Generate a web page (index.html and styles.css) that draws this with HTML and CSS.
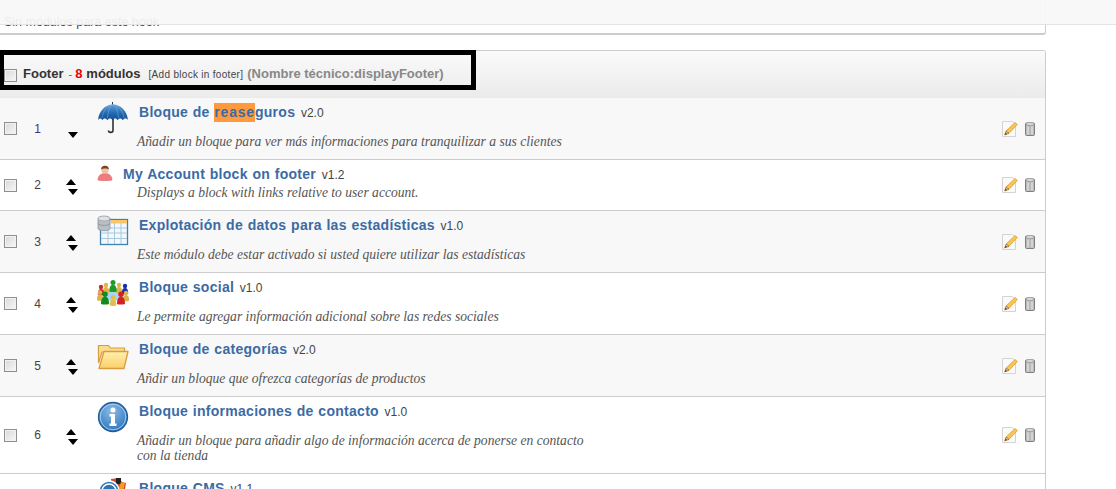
FILE: index.html
```html
<!DOCTYPE html>
<html lang="es">
<head>
<meta charset="utf-8">
<title>Módulos</title>
<link rel="stylesheet" href="styles.css">
</head>
<body>
<svg class="defs" width="0" height="0" aria-hidden="true">
  <defs>
    <linearGradient id="gUmb" x1="0" y1="0" x2="0" y2="1"><stop offset="0" stop-color="#5f9fd8"/><stop offset=".6" stop-color="#1f66ad"/><stop offset="1" stop-color="#144f8f"/></linearGradient>
    <linearGradient id="gFold" x1="0" y1="0" x2="0" y2="1"><stop offset="0" stop-color="#fff0b0"/><stop offset="1" stop-color="#fbcf68"/></linearGradient>
    <radialGradient id="gInfo" cx=".45" cy=".3" r=".8"><stop offset="0" stop-color="#8cbbe6"/><stop offset=".7" stop-color="#3f84c8"/><stop offset="1" stop-color="#2a66a8"/></radialGradient>
    <g id="pers"><circle cx="0" cy="-3" r="2.200"/><path d="M-3.200 4.500C-3.200 0-1.500-1 0-1S3.200 0 3.200 4.500C2 5.500-2 5.500-3.200 4.500z"/></g>
    <symbol id="arrows" viewBox="0 0 12 16"><path d="M0 6 5 0l5 6z" fill="#000"/><path d="M2 10h10l-5 6z" fill="#000"/></symbol>
    <symbol id="arrow-down" viewBox="0 0 12 16"><path d="M2 10h10l-5 6z" fill="#000"/></symbol>
    <symbol id="pencil" viewBox="0 0 16 16"><path d="M.5.5h10l3 3v12H.5z" fill="#fafafa" stroke="#d4d4d4"/><path d="M13 1.500l2.400 2L7 12.400 4 10z" fill="#f6c552" stroke="#d99a2b" stroke-width=".7"/><path d="M4 10l3 2.400-4.300 1.500z" fill="#e9c9a0" stroke="#8a5a20" stroke-width=".6"/><path d="M2.700 13.900l1-2.300 1.300 1.300z" fill="#5a3a10"/></symbol>
    <symbol id="trash" viewBox="0 0 10 14"><rect x=".5" y="1" width="9" height="12.500" rx="1" fill="#b9b9b9" stroke="#7f7f7f"/><ellipse cx="5" cy="2" rx="4.200" ry="1.400" fill="#e2e2e2" stroke="#8a8a8a" stroke-width=".7"/><path d="M3 4.500v8M7 4.500v8" stroke="#efefef"/></symbol>
  </defs>
</svg>

<div class="topbar"></div>
<div class="annotation"></div>

<main class="content">
  <section class="panel panel-empty">
    <p class="empty-text">Sin módulos para este hook</p>
  </section>

  <section class="panel panel-hook">
    <header class="hook-head">
      <input class="check" type="checkbox">
      <span class="hook-name">Footer</span>
      <span class="hook-dash">-</span>
      <span class="hook-count">8</span>
      <span class="hook-name">módulos</span>
      <a class="hook-add">[Add block in footer]</a>
      <span class="hook-tech">(Nombre técnico:displayFooter)</span>
    </header>

    <div class="row alt">
      <div class="cell-check"><input class="check" type="checkbox"></div>
      <div class="cell-num num-first">1</div>
      <div class="cell-move"><svg class="move"><use href="#arrow-down"/></svg></div>
      <div class="cell-main">
        <div class="head">
          <svg class="icon" viewBox="0 0 32 32">
            <path d="M15.500 0v3" stroke="#333" stroke-width="1"/>
            <path d="M1 18C2 9 8 2.500 16 2.500S30 9 31 18c-1.500-2-4-2-5.200.2-1.300-2.200-3.900-2.200-5.200 0-1.300-2.200-3.900-2.200-5 0-1.300-2.200-3.900-2.200-5.200 0-1.300-2.200-3.900-2.200-5.200 0C4.500 16 2.500 16 1 18z" fill="url(#gUmb)"/>
            <path d="M10.500 16C11 9 13 4 16 2.500 19 4 21 9 21.500 16M5 16C6 9 10 4 16 2.500 22 4 26 9 27 16" fill="none" stroke="#7fb4e4" stroke-width=".5"/>
            <path d="M16 17v11.500c0 2.500-4.500 2.500-4.500 0" fill="none" stroke="#333" stroke-width="1.600"/>
          </svg>
          <h3 class="title">Bloque de <mark class="hit">rease</mark>guros <span class="version">v2.0</span></h3>
        </div>
        <p class="desc">Añadir un bloque para ver más informaciones para tranquilizar a sus clientes</p>
      </div>
      <div class="cell-actions"><svg class="act-edit"><use href="#pencil"/></svg><svg class="act-del"><use href="#trash"/></svg></div>
    </div>

    <div class="row">
      <div class="cell-check"><input class="check" type="checkbox"></div>
      <div class="cell-num">2</div>
      <div class="cell-move"><svg class="move"><use href="#arrows"/></svg></div>
      <div class="cell-main">
        <div class="head head-small">
          <svg class="icon-small" viewBox="0 0 16 16">
            <path d="M1 15c0-4 2.500-6.500 7-6.500s7 2.500 7 6.500c-2 1-12 1-14 0z" fill="#ee7d7d" stroke="#d85b5b" stroke-width=".5"/>
            <circle cx="8" cy="5" r="3.600" fill="#f3c3a0"/>
            <path d="M4.200 4.500C4.200 1.500 6 .8 8 .8s3.800.7 3.800 3.700C10.500 3 6 3 4.200 4.500z" fill="#7a4222"/>
          </svg>
          <h3 class="title">My Account block on footer <span class="version">v1.2</span></h3>
        </div>
        <p class="desc">Displays a block with links relative to user account.</p>
      </div>
      <div class="cell-actions"><svg class="act-edit"><use href="#pencil"/></svg><svg class="act-del"><use href="#trash"/></svg></div>
    </div>

    <div class="row alt">
      <div class="cell-check"><input class="check" type="checkbox"></div>
      <div class="cell-num">3</div>
      <div class="cell-move"><svg class="move"><use href="#arrows"/></svg></div>
      <div class="cell-main">
        <div class="head">
          <svg class="icon" viewBox="0 0 32 32">
            <rect x="3.500" y="4.500" width="27" height="25" fill="#f2f8fd" stroke="#3f83ad" stroke-width="1.300"/>
            <rect x="14" y="5" width="16" height="3.500" fill="#f7c76a"/>
            <path d="M4 13h26M4 18h26M4 23.500h26M11 8v21M17.500 8v21M24 8v21" stroke="#a9c8de" stroke-width="1"/>
            <path d="M1 3.500C1 .5 13 .5 13 3.500v10c0 3-12 3-12 0z" fill="#b7bec4" stroke="#848a90" stroke-width=".7"/>
            <ellipse cx="7" cy="3.500" rx="6" ry="2.400" fill="#dfe3e6" stroke="#848a90" stroke-width=".5"/>
            <path d="M1 8.500c1 2.500 11 2.500 12 0" fill="none" stroke="#848a90" stroke-width=".7"/>
          </svg>
          <h3 class="title">Explotación de datos para las estadísticas <span class="version">v1.0</span></h3>
        </div>
        <p class="desc">Este módulo debe estar activado si usted quiere utilizar las estadísticas</p>
      </div>
      <div class="cell-actions"><svg class="act-edit"><use href="#pencil"/></svg><svg class="act-del"><use href="#trash"/></svg></div>
    </div>

    <div class="row">
      <div class="cell-check"><input class="check" type="checkbox"></div>
      <div class="cell-num">4</div>
      <div class="cell-move"><svg class="move"><use href="#arrows"/></svg></div>
      <div class="cell-main">
        <div class="head">
          <svg class="icon" viewBox="0 0 32 32">
            <ellipse cx="16" cy="18" rx="10" ry="6" fill="#a5d6f2"/>
            <use href="#pers" transform="translate(9 11)" fill="#dcb54a"/>
            <use href="#pers" transform="translate(22 11)" fill="#dcb54a"/>
            <use href="#pers" transform="translate(16 9) scale(1.150)" fill="#1f9a2a"/>
            <use href="#pers" transform="translate(4 13)" fill="#cf2a2a"/>
            <use href="#pers" transform="translate(28 12)" fill="#1a2fb0"/>
            <use href="#pers" transform="translate(3 18.500)" fill="#dcb54a"/>
            <use href="#pers" transform="translate(29 19)" fill="#dcb54a"/>
            <use href="#pers" transform="translate(8 21) scale(1.250)" fill="#128a1e"/>
            <use href="#pers" transform="translate(24 21) scale(1.250)" fill="#d42222"/>
            <use href="#pers" transform="translate(16 23.500) scale(1.050)" fill="#e5bd4c"/>
          </svg>
          <h3 class="title">Bloque social <span class="version">v1.0</span></h3>
        </div>
        <p class="desc">Le permite agregar información adicional sobre las redes sociales</p>
      </div>
      <div class="cell-actions"><svg class="act-edit"><use href="#pencil"/></svg><svg class="act-del"><use href="#trash"/></svg></div>
    </div>

    <div class="row alt">
      <div class="cell-check"><input class="check" type="checkbox"></div>
      <div class="cell-num">5</div>
      <div class="cell-move"><svg class="move"><use href="#arrows"/></svg></div>
      <div class="cell-main">
        <div class="head">
          <svg class="icon" viewBox="0 0 32 32">
            <path d="M1.500 6.500h10l2 2.500h14v4H5L1.500 24z" fill="#fbdc8c" stroke="#d99c3e" stroke-width="1.200"/>
            <path d="M7 12.500h24L27 29.500H2z" fill="url(#gFold)" stroke="#d99c3e" stroke-width="1.300" stroke-linejoin="round"/>
          </svg>
          <h3 class="title">Bloque de categorías <span class="version">v2.0</span></h3>
        </div>
        <p class="desc">Añdir un bloque que ofrezca categorías de productos</p>
      </div>
      <div class="cell-actions"><svg class="act-edit"><use href="#pencil"/></svg><svg class="act-del"><use href="#trash"/></svg></div>
    </div>

    <div class="row">
      <div class="cell-check"><input class="check" type="checkbox"></div>
      <div class="cell-num">6</div>
      <div class="cell-move"><svg class="move"><use href="#arrows"/></svg></div>
      <div class="cell-main">
        <div class="head">
          <svg class="icon" viewBox="0 0 32 32">
            <circle cx="16" cy="16" r="14.500" fill="url(#gInfo)" stroke="#1f5c9e" stroke-width="1.300"/>
            <circle cx="16" cy="16" r="12.800" fill="none" stroke="#bcd9f2" stroke-width=".8"/>
            <circle cx="16" cy="9" r="2.500" fill="#fff"/>
            <path d="M12.500 13h5.500v9.500h1.500V25h-7v-2.500H14V15.500h-1.500z" fill="#fff"/>
          </svg>
          <h3 class="title">Bloque informaciones de contacto <span class="version">v1.0</span></h3>
        </div>
        <p class="desc">Añadir un bloque para añadir algo de información acerca de ponerse en contacto con la tienda</p>
      </div>
      <div class="cell-actions"><svg class="act-edit"><use href="#pencil"/></svg><svg class="act-del"><use href="#trash"/></svg></div>
    </div>

    <div class="row">
      <div class="cell-check"></div>
      <div class="cell-num"></div>
      <div class="cell-move"></div>
      <div class="cell-main">
        <div class="head">
          <svg class="icon" viewBox="0 0 32 32">
            <path d="M14 1l8-1 3 4 4 1-2 12H14z" fill="#d9472b"/>
            <path d="M19 0h5v6h-5z" fill="#222"/>
            <path d="M24 4l4 1-2 8-4-3z" fill="#f0a020"/>
            <circle cx="12" cy="13" r="10" fill="#2b77b5" stroke="#fff" stroke-width="1.500"/>
            <circle cx="12" cy="13" r="7" fill="none" stroke="#fff" stroke-width="1.500"/>
          </svg>
          <h3 class="title">Bloque CMS <span class="version">v1.1</span></h3>
        </div>
      </div>
    </div>
  </section>
</main>
</body>
</html>
```

FILE: styles.css
```css
html, body {
  margin: 0;
  padding: 0;
  height: 489px;
  overflow: hidden;
  background: #fff;
}

body {
  position: relative;
  font-family: "Liberation Sans", Arial, sans-serif;
  font-size: 12px;
  color: #444;
}

.defs {
  position: absolute;
}

.topbar {
  position: absolute;
  top: 0;
  left: 0;
  right: 0;
  height: 24px;
  background: rgba(247, 247, 247, 0.93);
  border-bottom: 1px solid #e4e4e4;
  z-index: 2;
}

.annotation {
  position: absolute;
  top: 50px;
  left: -1px;
  width: 467px;
  height: 30px;
  border: 5px solid #000;
  z-index: 3;
}

.content {
  width: 1046px;
}

.panel {
  box-sizing: border-box;
  border-right: 1px solid #ccc;
}

.panel-empty {
  height: 35px;
  padding-top: 15px;
  border-bottom: 2px solid #ccc;
  border-radius: 0 0 3px 0;
}

.empty-text {
  margin: 0 0 0 4px;
  font-size: 12.5px;
  line-height: 15px;
  color: #5a3a6a;
}

.panel-hook {
  margin-top: 15px;
  border-top: 1px solid #ccc;
  border-radius: 3px 3px 0 0;
}

.hook-head {
  box-sizing: border-box;
  height: 47px;
  display: flex;
  align-items: baseline;
  padding: 15px 0 0 4px;
  background: linear-gradient(#fafafa, #ebebeb);
  font-size: 13px;
  line-height: 16px;
}

.hook-head .check {
  align-self: flex-start;
  margin: 3px 6px 0 0;
}

.hook-name {
  font-weight: bold;
  color: #333;
}

.hook-dash {
  margin: 0 3px 0 5px;
  font-size: 11px;
  color: #666;
}

.hook-count {
  margin-right: 4px;
  font-weight: bold;
  color: #e00;
}

.hook-add {
  margin: 0 4px 0 8px;
  font-size: 10px;
  letter-spacing: 0.3px;
  color: #444;
}

.hook-tech {
  font-weight: bold;
  color: #888;
}

.check {
  appearance: none;
  box-sizing: border-box;
  display: block;
  width: 13px;
  height: 13px;
  margin: 0;
  border: 1px solid #8f8f8f;
  background: linear-gradient(135deg, #d8d8d8, #f8f8f8);
  box-shadow: inset 0 0 0 1px #f2f2f2;
}

.row {
  display: grid;
  grid-template-columns: 25px 25px 44px 1fr auto;
  align-items: center;
  border-top: 1px solid #ccc;
  background: #fff;
}

.hook-head + .row {
  border-top: 0;
}

.row.alt {
  background: #f8f8f8;
}

.cell-check {
  padding-left: 4px;
}

.cell-num {
  text-align: center;
  line-height: 14px;
  color: #444;
}

.num-first {
  color: #4f2a86;
}

.cell-move {
  display: flex;
  justify-content: center;
}

.move {
  display: block;
  width: 12px;
  height: 16px;
  margin: 3px 0 0 0;
}

.cell-main {
  padding: 4px 0 10px 3px;
}

.head {
  display: flex;
  align-items: flex-start;
  min-height: 32px;
}

.head-small {
  min-height: 21px;
}

.icon {
  display: block;
  flex: none;
  width: 32px;
  height: 32px;
  margin-right: 10px;
}

.icon-small {
  display: block;
  flex: none;
  width: 16px;
  height: 16px;
  margin: 1px 10px 0 0;
}

.title {
  margin: 2px 0 0;
  font-size: 14px;
  line-height: 16px;
  font-weight: bold;
  color: #3b6ba5;
  letter-spacing: 0.28px;
  word-spacing: 0.5px;
}

.hit {
  display: inline-block;
  line-height: 19px;
  margin-top: -2px;
  background: #ff9a3c;
  color: #3b6ba5;
  letter-spacing: 0.8px;
}

.version {
  margin-left: 1px;
  font-size: 12px;
  font-weight: normal;
  color: #444;
  letter-spacing: 0;
}

.desc {
  max-width: 450px;
  margin: 0 0 0 40px;
  font-family: "Liberation Serif", "Times New Roman", serif;
  font-size: 13.6px;
  font-style: italic;
  line-height: 15px;
  color: #555;
}

.cell-actions {
  display: flex;
  align-items: center;
  gap: 7px;
  padding-right: 10px;
}

.act-edit {
  display: block;
  width: 16px;
  height: 16px;
}

.act-del {
  display: block;
  width: 10px;
  height: 14px;
}
```
